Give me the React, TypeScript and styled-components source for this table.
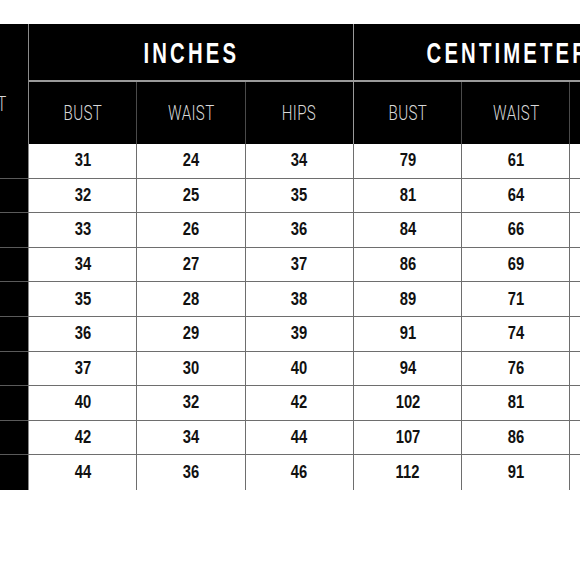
import React from 'react';
import styled, { createGlobalStyle } from 'styled-components';

const GlobalStyle = createGlobalStyle`
  html, body {
    margin: 0;
    padding: 0;
    background: #ffffff;
  }
`;

const FONT = `"Liberation Sans", Arial, sans-serif`;
const LIGHT_FONT = `Roboto, "Liberation Sans", Arial, sans-serif`;

// Page wrapper, the chart is cropped on the right
const Page = styled.div`
  width: 580px;
  height: 580px;
  padding-top: 24px;
  box-sizing: border-box;
  overflow: hidden;
  background: #fff;
`;

const ChartGrid = styled.div`
  display: grid;
  grid-template-columns: 29px repeat(6, 108.3px);
  grid-template-rows: 58px 62px repeat(10, 34.6px);
  font-family: ${FONT};
`;

const CornerCell = styled.div`
  grid-row: span 2;
  background: #000;
  border-right: 1px solid #8a8a8a;
  display: flex;
  align-items: center;
  justify-content: flex-end;
  overflow: hidden;
  white-space: nowrap;
  padding-right: 21px;
  padding-top: 40px;
`;

const GroupCell = styled.div<{ $divider?: boolean }>`
  grid-column: span 3;
  background: #000;
  border-bottom: 2px solid #9a9a9a;
  border-right: ${(p) => (p.$divider ? '1px solid #9a9a9a' : 'none')};
  display: flex;
  align-items: center;
  justify-content: center;
  white-space: nowrap;
  padding-top: 2px;
`;

// condensed caption letters, narrowed from a regular face
const GroupLabel = styled.span`
  display: inline-block;
  color: #fff;
  font-size: 29px;
  font-weight: 700;
  letter-spacing: 4.5px;
  transform: scaleX(0.7);
`;

const SubCell = styled.div<{ $strong?: boolean }>`
  background: #000;
  border-right: 1px solid ${(p) => (p.$strong ? '#9a9a9a' : '#4a4a4a')};
  display: flex;
  align-items: center;
  justify-content: center;
  white-space: nowrap;
`;

const SubLabel = styled.span<{ $right?: boolean }>`
  display: inline-block;
  color: #d8d8d8;
  font-family: ${LIGHT_FONT};
  font-size: 21px;
  font-weight: 300;
  letter-spacing: 0.5px;
  transform: scaleX(0.72);
  transform-origin: ${(p) => (p.$right ? 'right center' : 'center')};
`;

const SizeCell = styled.div<{ $last?: boolean }>`
  background: #000;
  border-right: 1px solid #8a8a8a;
  border-bottom: ${(p) => (p.$last ? 'none' : '1px solid #5a5a5a')};
`;

const ValueCell = styled.div<{ $last?: boolean }>`
  background: #fff;
  border-right: 1.5px solid #6e6e6e;
  border-bottom: ${(p) => (p.$last ? 'none' : '1.5px solid #6e6e6e')};
  display: flex;
  align-items: center;
  justify-content: center;
`;

const Num = styled.span`
  display: inline-block;
  color: #111;
  font-size: 18px;
  font-weight: 700;
  transform: scaleX(0.82);
`;

const columns = ['BUST', 'WAIST', 'HIPS', 'BUST', 'WAIST', 'HIPS'];

const rows = [
  [31, 24, 34, 79, 61, 86],
  [32, 25, 35, 81, 64, 89],
  [33, 26, 36, 84, 66, 91],
  [34, 27, 37, 86, 69, 94],
  [35, 28, 38, 89, 71, 97],
  [36, 29, 39, 91, 74, 99],
  [37, 30, 40, 94, 76, 102],
  [40, 32, 42, 102, 81, 107],
  [42, 34, 44, 107, 86, 112],
  [44, 36, 46, 112, 91, 117],
];

const App: React.FC = () => {
  return (
    <Page>
      <GlobalStyle />
      <ChartGrid>
        <CornerCell>
          <SubLabel $right>SIZE CHART</SubLabel>
        </CornerCell>
        <GroupCell $divider>
          <GroupLabel>INCHES</GroupLabel>
        </GroupCell>
        <GroupCell>
          <GroupLabel>CENTIMETERS</GroupLabel>
        </GroupCell>
        {columns.map((col, i) => (
          <SubCell key={i} $strong={i === 2}>
            <SubLabel>{col}</SubLabel>
          </SubCell>
        ))}
        {rows.map((row, r) => (
          <React.Fragment key={r}>
            <SizeCell $last={r === rows.length - 1} />
            {row.map((val, c) => (
              <ValueCell key={c} $last={r === rows.length - 1}>
                <Num>{val}</Num>
              </ValueCell>
            ))}
          </React.Fragment>
        ))}
      </ChartGrid>
    </Page>
  );
};

export default App;
